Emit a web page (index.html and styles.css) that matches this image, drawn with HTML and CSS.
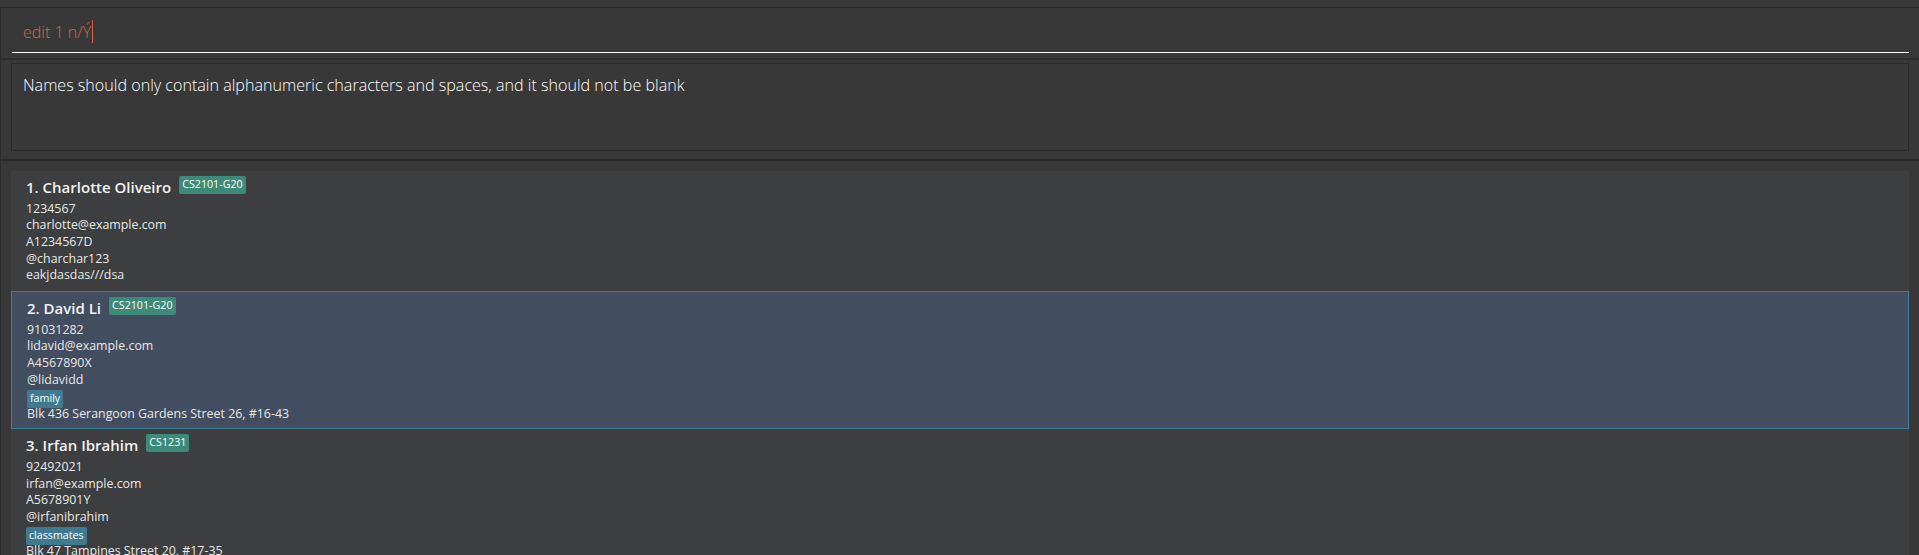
FILE: index.html
```html
<!DOCTYPE html>
<html>
<head>
<meta charset="utf-8">
<link rel="stylesheet" href="styles.css">
</head>
<body>
<div class="app">
  <div class="top-strip"></div>
  <div class="command-pane">
    <div class="command-field"><span class="command-text">edit 1 n/Ý</span><span class="caret"></span></div>
  </div>
  <div class="result-pane">
    <div class="result-box">Names should only contain alphanumeric characters and spaces, and it should not be blank</div>
  </div>
  <div class="list-pane">
    <div class="card">
      <div class="name-row"><span class="name">1. Charlotte Oliveiro</span><span class="tag tag-module">CS2101-G20</span></div>
      <div class="details">
        <div class="line">1234567</div>
        <div class="line">charlotte@example.com</div>
        <div class="line">A1234567D</div>
        <div class="line">@charchar123</div>
        <div class="line">eakjdasdas///dsa</div>
      </div>
    </div>
    <div class="card selected">
      <div class="name-row"><span class="name">2. David Li</span><span class="tag tag-module">CS2101-G20</span></div>
      <div class="details">
        <div class="line">91031282</div>
        <div class="line">lidavid@example.com</div>
        <div class="line">A4567890X</div>
        <div class="line">@lidavidd</div>
        <div class="tag-row"><span class="tag">family</span></div>
        <div class="line">Blk 436 Serangoon Gardens Street 26, #16-43</div>
      </div>
    </div>
    <div class="card">
      <div class="name-row"><span class="name">3. Irfan Ibrahim</span><span class="tag tag-module">CS1231</span></div>
      <div class="details">
        <div class="line">92492021</div>
        <div class="line">irfan@example.com</div>
        <div class="line">A5678901Y</div>
        <div class="line">@irfanibrahim</div>
        <div class="tag-row"><span class="tag">classmates</span></div>
        <div class="line">Blk 47 Tampines Street 20, #17-35</div>
      </div>
    </div>
  </div>
</div>
</body>
</html>
```
FILE: styles.css
```css
html, body {
  margin: 0;
  padding: 0;
  background: #383838;
  overflow: hidden;
}
.app {
  width: 1919px;
  height: 555px;
  font-family: "Open Sans", "Noto Sans", sans-serif;
  background: #383838;
}
.top-strip {
  height: 7px;
}
.command-pane {
  border-top: 1px solid #2b2b2b;
  border-left: 1px solid #2b2b2b;
  height: 50px;
  padding: 0 10px 0 11px;
}
.command-field {
  height: 31px;
  padding: 13px 0 0 11px;
  border-bottom: 1px solid #ffffff;
  display: flex;
  align-items: flex-start;
  font-weight: 300;
  font-size: 16px;
  line-height: 22px;
}
.command-text {
  color: #d06651;
}
.caret {
  display: block;
  width: 1px;
  height: 23px;
  margin-top: -1px;
  margin-left: 1px;
  background: #d06651;
}
.result-pane {
  border-top: 2px solid #2b2b2b;
  border-left: 1px solid #2b2b2b;
  height: 96px;
  padding: 3px 10px 0 10px;
}
.result-box {
  border: 1px solid #2a2a2a;
  box-sizing: border-box;
  height: 88px;
  padding: 10px 11px 0 11px;
  color: #ffffff;
  font-weight: 300;
  font-size: 16.1px;
  line-height: 22px;
}
.list-pane {
  border-top: 2px solid #2b2b2b;
  border-left: 1px solid #2b2b2b;
  padding: 10px 10px 0 10px;
  height: 400px;
}
.card {
  background: #3c3e3f;
  padding: 5px 15px 7px 15px;
  box-sizing: border-box;
}
.card.selected {
  background: #424d5f;
  border: 1px solid #3a7f93;
  padding: 5px 14px 6px 15px;
}
.name-row {
  display: flex;
  align-items: flex-start;
  gap: 8px;
}
.name {
  font-size: 15px;
  font-weight: 600;
  color: #f2f2f2;
  line-height: 23px;
}
.tag {
  display: block;
  background: #3e7b91;
  color: #ffffff;
  font-size: 10.7px;
  line-height: 15.6px;
  padding: 1px 3px;
  border-radius: 2px;
}
.tag-module {
  background: #3d8a78;
}
.details {
  margin-top: 1.6px;
}
.line {
  font-size: 12.4px;
  line-height: 16.7px;
  color: #e8e8e8;
  white-space: nowrap;
}
.tag-row {
  display: flex;
  align-items: flex-start;
  height: 17px;
  padding-top: 1.5px;
  box-sizing: border-box;
}
```
